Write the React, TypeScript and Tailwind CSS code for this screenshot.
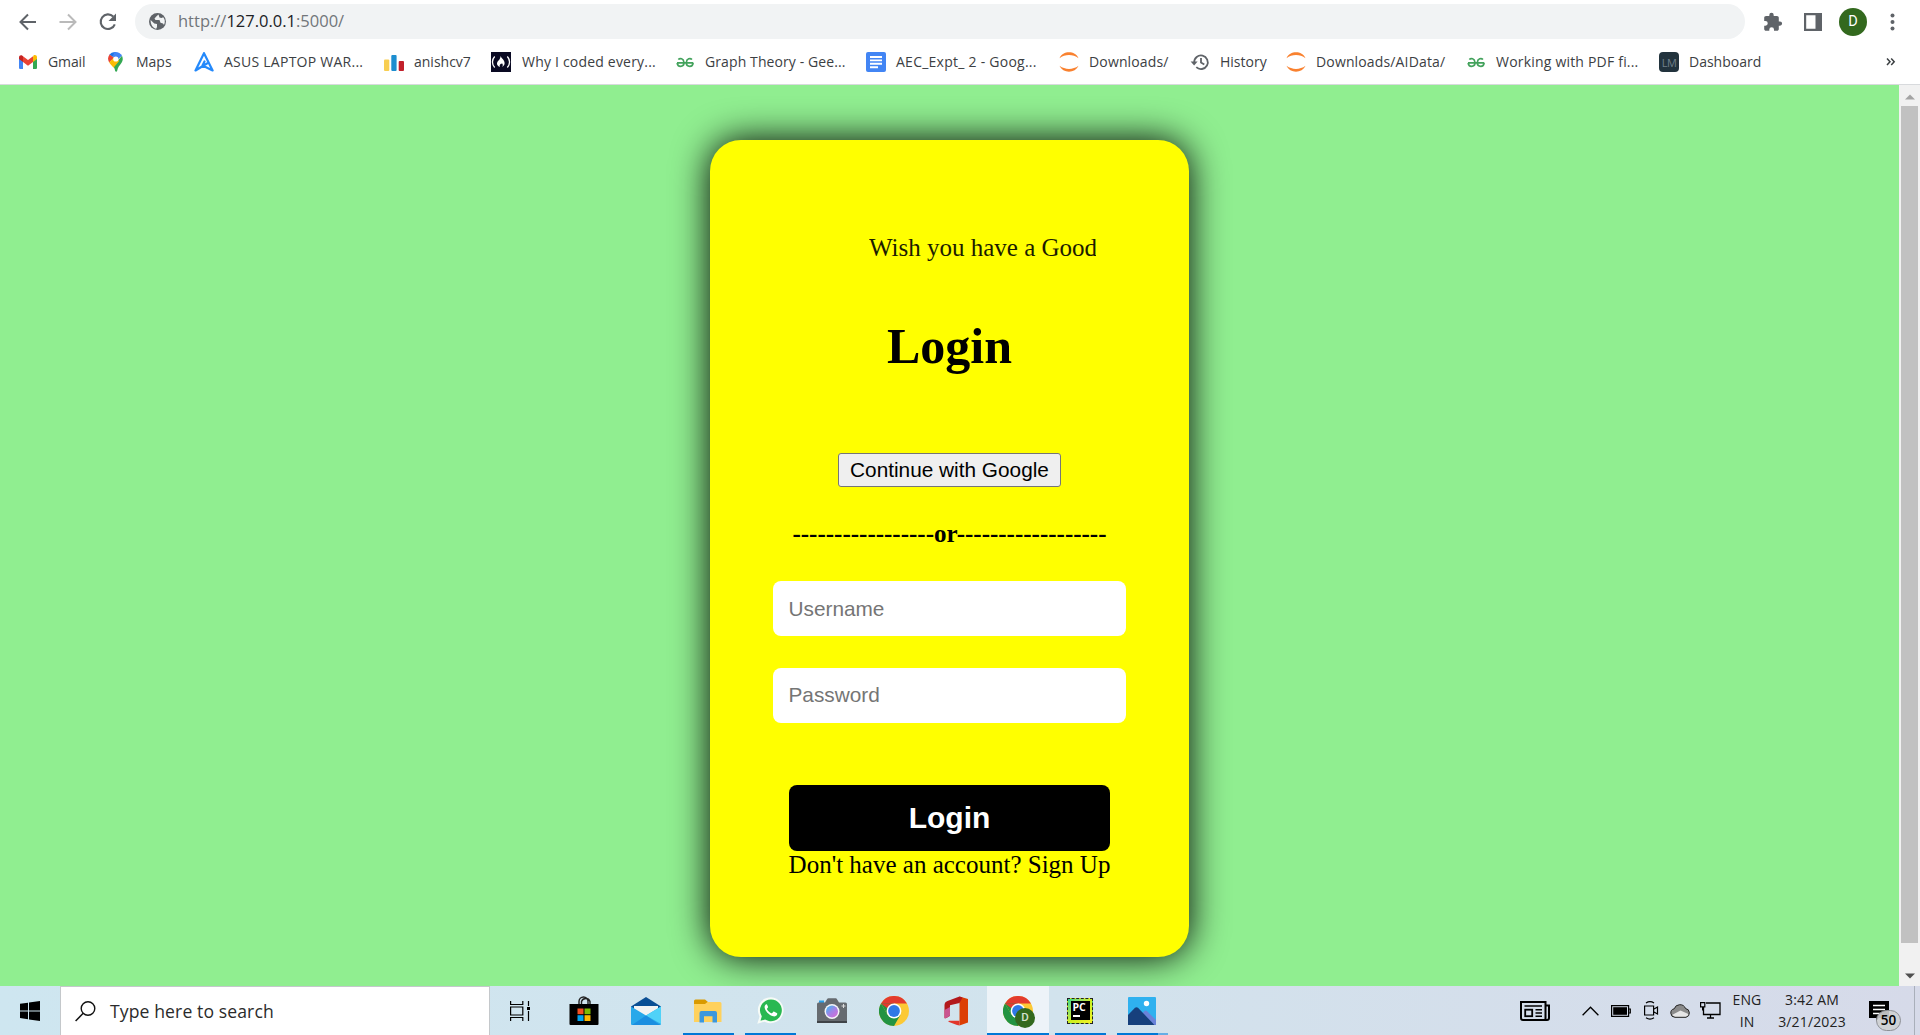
import type { ReactNode } from "react";

function Svg({ w, h, children, className = "" }: { w: number; h: number; children: ReactNode; className?: string }) {
  return (
    <svg width={w} height={h} viewBox={`0 0 ${w} ${h}`} fill="none" className={`block shrink-0 ${className}`}>
      {children}
    </svg>
  );
}

/* ---------- Bookmark icons (20x20) ---------- */

const Gmail = () => (
  <Svg w={20} h={20}>
    <path d="M1 5.5v10.200c0 .8.6 1.300 1.300 1.300H5V9z" fill="#4285f4" />
    <path d="M19 5.5v10.200c0 .8-.6 1.300-1.300 1.300H15V9z" fill="#34a853" />
    <path d="M15 5v5l4-3V5.3C19 3.4 17 2.5 15.5 3.6z" fill="#fbbc04" />
    <path d="M5 10V4.2l5 3.8 5-3.8V10l-5 3.8z" fill="#ea4335" />
    <path d="M1 5.3V7l4 3V4.2l-.6-.5C3 2.6 1 3.4 1 5.3z" fill="#c5221f" />
  </Svg>
);

const Maps = () => (
  <Svg w={20} h={20}>
    <path d="M3.3 2.8A7 7 0 0 1 10 .2L7 5z" fill="#1a73e8" />
    <path d="M8 .3c3-.8 6.6.7 8 3.5L11.5 8 7 5z" fill="#4285f4" />
    <path d="M3.6 2.6A7 7 0 0 0 3.2 10.5L8 5.7z" fill="#ea4335" />
    <path d="M16 3.8c1.300 2.800.8 5.200-.6 7.200-2 2.800-3.600 4.300-4.200 7.700-.3 1.400-1.800 1.400-2.100 0-.4-2-.9-3.200-1.800-4.700z" fill="#34a853" />
    <path d="M3.2 10.5c1 2 2.8 3 4.3 5.2L13 9.2 11.5 5 8 5.2z" fill="#fbbc04" />
    <circle cx="9.8" cy="7" r="2.6" fill="#fff" />
  </Svg>
);

const Asus = () => (
  <Svg w={20} h={20}>
    <path d="M10 1.200 1.500 18.500 13 11.500M10 1.200 18.600 18.500 8.500 13.500 10.500 9.500" stroke="#2489fb" strokeWidth="2.2" strokeLinejoin="round" strokeLinecap="round" />
  </Svg>
);

const Bars = () => (
  <Svg w={20} h={20}>
    <rect x="0" y="7.5" width="5.3" height="11.5" rx="1" fill="#f8ce51" />
    <rect x="7.3" y="3" width="5.3" height="16" rx="1" fill="#1c8ed0" />
    <rect x="14.7" y="9" width="5.3" height="10" rx="1" fill="#c2202b" />
  </Svg>
);

const Fcc = () => (
  <Svg w={20} h={20}>
    <rect width="20" height="20" fill="#0a0a23" />
    <path d="M3.700 4.500c-3 3.200-3 7.800 0 11M16.300 4.500c3 3.200 3 7.800 0 11" stroke="#fff" strokeWidth="1.3" />
    <path d="M9.6 4c.6 2.200 4.400 4.200 4 7.600-.2 1.700-1.200 2.800-2.400 3.400 1-1.600.6-2.700-.3-3.900-.2.9-.7 1-1 .6-1.300 1-1.500 2.200-.8 3.300C5.500 13.800 5.300 11 7.300 8.800 8.800 7.200 9.500 6 9.600 4z" fill="#fff" />
  </Svg>
);

const Gfg = () => (
  <Svg w={20} h={20}>
    <path d="M2 10.800h16.300M3.300 7.500C5 5.900 8.600 6.300 9 10.500 9 13 7.500 14.300 5.500 14.300 3.600 14.300 2.400 13 2.200 10.800M17 7.500c-1.700-1.600-5.300-1.200-5.700 3 0 2.500 1.500 3.800 3.500 3.800 1.900 0 3.100-1.300 3.300-3.500" stroke="#43a25c" strokeWidth="1.7" />
  </Svg>
);

const Docs = () => (
  <Svg w={20} h={20}>
    <rect width="20" height="20" rx="2" fill="#4285f4" />
    <path d="M4 5h12M4 8.400h12M4 11.700h12M4 15.200h8" stroke="#fff" strokeWidth="1.9" />
  </Svg>
);

const Jupyter = () => (
  <Svg w={20} h={20}>
    <path d="M.5 6.200C3.800-1.600 16.200-1.600 19.500 6.200 14 2 6 2 .5 6.200zM.5 13.800c3.300 7.800 15.700 7.800 19 0-5.500 4.200-13.500 4.200-19 0z" fill="#f9812f" />
  </Svg>
);

const HistoryIcon = () => (
  <Svg w={20} h={20}>
    <path d="M4.200 10.500A6.800 6.800 0 1 1 6.300 15.200M11 6v4.500l3.300 2" stroke="#5f6368" strokeWidth="1.8" />
    <path d="M.6 9.500h7L4.100 13.500z" fill="#5f6368" />
  </Svg>
);

const Dash = () => (
  <div className="flex size-5 items-center justify-center rounded bg-[#22333d] font-['Open_Sans',sans-serif] text-[11px] leading-none tracking-[-0.5px] text-[#71808a]">
    LM
  </div>
);

type Bookmark = { label: string; icon: ReactNode; width: string; text: string };

const bookmarks: Bookmark[] = [
  { label: "Gmail", icon: <Gmail />, width: "w-[88px]", text: "tracking-[-0.1px]" },
  { label: "Maps", icon: <Maps />, width: "w-[88px]", text: "" },
  { label: "ASUS LAPTOP WAR...", icon: <Asus />, width: "w-[190px]", text: "tracking-[0.25px]" },
  { label: "anishcv7", icon: <Bars />, width: "w-[107px]", text: "" },
  { label: "Why I coded every...", icon: <Fcc />, width: "w-[184px]", text: "tracking-[0.2px] ml-px" },
  { label: "Graph Theory - Gee...", icon: <Gfg />, width: "w-[191px]", text: "tracking-[0.1px]" },
  { label: "AEC_Expt_ 2 - Goog...", icon: <Docs />, width: "w-[193px]", text: "tracking-[0.25px]" },
  { label: "Downloads/", icon: <Jupyter />, width: "w-[131px]", text: "tracking-[0.15px]" },
  { label: "History", icon: <HistoryIcon />, width: "w-[96px]", text: "" },
  { label: "Downloads/AIData/", icon: <Jupyter />, width: "w-[180px]", text: "tracking-[0.15px]" },
  { label: "Working with PDF fi...", icon: <Gfg />, width: "w-[193px]", text: "tracking-[0.2px]" },
  { label: "Dashboard", icon: <Dash />, width: "w-[130px]", text: "" },
];

function Toolbar() {
  return (
    <div className="flex h-[43px] items-center pl-[18px]">
      <Svg w={20} h={20}>
        <path d="M18 10H3M10 2.500 2.500 10l7.500 7.500" stroke="#5f6368" strokeWidth="2" />
      </Svg>
      <Svg w={20} h={20} className="ml-5">
        <path d="M1.500 10H17M10 2.500l7.500 7.500-7.500 7.500" stroke="#bababa" strokeWidth="2" />
      </Svg>
      <Svg w={20} h={20} className="ml-5">
        <path d="M15.200 4.600A7.300 7.300 0 1 0 16.800 12.300" stroke="#5f6368" strokeWidth="2.1" />
        <path d="M18 1.500V9h-7.500z" fill="#5f6368" />
      </Svg>
      <div className="ml-[17px] flex h-[35px] w-[1610px] items-center rounded-full bg-[#f1f3f4] pl-[14px]">
        <Svg w={17} h={17}>
          <circle cx="8.5" cy="8.5" r="8.5" fill="#5f6368" />
          <path d="M1.600 7 5.300 10.600 8 11v3l-.8 1.800C4 15 1.500 12 1.600 7zM9.500 1.600 7.300 3.500 5.500 5.500l1 1.500h4l1 2.800 2.500.8 1 1.400c1.500-3 .8-6-.8-7.700L12.500 5l-2-.5z" fill="#f1f3f4" />
        </Svg>
        <div className="ml-3 whitespace-pre text-[16.5px] text-[#72767a]">
          http://<span className="text-[#202124]">127.0.0.1</span>:5000/
        </div>
      </div>
      <Svg w={20} h={20} className="ml-[18px]">
        <path d="M17 9.500h-1.200V5.800c0-1-.8-1.800-1.800-1.800h-3.300V3a2.200 2.200 0 0 0-4.400 0v1H3.200C1.800 4 1.200 4.800 1.200 5.800V9h1.200a2.300 2.300 0 0 1 0 4.700H1.200V17c0 1 .8 1.800 1.800 1.800h3.300v-1.200a2.300 2.300 0 0 1 4.700 0v1.200h3c1 0 1.800-.8 1.800-1.800v-3.300H17a2.100 2.100 0 0 0 0-4.200z" fill="#5f6368" />
      </Svg>
      <Svg w={18} h={18} className="ml-[21px]">
        <path d="M0 0h18v18H0zM2.200 2.200v13.600h9.300V2.200z" fill="#5f6368" fillRule="evenodd" />
      </Svg>
      <div className="ml-[17px] flex size-7 items-center justify-center rounded-full bg-[#33691e] font-['Roboto',sans-serif] text-[14.5px] text-white">D</div>
      <Svg w={6} h={20} className="ml-[23px]">
        <circle cx="2.5" cy="3.5" r="2" fill="#5f6368" />
        <circle cx="2.5" cy="10" r="2" fill="#5f6368" />
        <circle cx="2.5" cy="16.5" r="2" fill="#5f6368" />
      </Svg>
    </div>
  );
}

function BookmarkBar() {
  return (
    <div className="flex h-[41px] items-center pb-[3px] pl-[18px]">
      {bookmarks.map((b, i) => (
        <div key={i} className={`flex shrink-0 items-center gap-[10px] ${b.width}`}>
          {b.icon}
          <span className={`-mt-0.5 whitespace-nowrap text-[14px] text-[#3c4043] ${b.text}`}>{b.label}</span>
        </div>
      ))}
      <Svg w={10} h={10} className="-mt-px ml-[97px]">
        <path d="M1 1.500 4 4.700 1 8M5.200 1.500l3 3.200-3 3.300" stroke="#3c4043" strokeWidth="1.5" />
      </Svg>
    </div>
  );
}

function LoginCard() {
  return (
    <div className="mt-[55px] flex h-[817px] w-[479px] flex-col items-center rounded-[31px] bg-[#ffff00] pt-[94px] font-['Liberation_Serif',serif] text-[25px] leading-7 text-black shadow-[0_0_37.5px_#000]">
      <div className="w-[321px] overflow-hidden whitespace-nowrap pl-[80px]">
        <div className="w-[226.5px] overflow-hidden text-[#1c1c00]">Wish you have a Good</div>
      </div>
      <h1 className="mt-[56px] text-[50px] font-bold leading-[56px]">Login</h1>
      <button className="mt-[79px] h-[34px] w-[223px] rounded-[3px] border border-[#767676] bg-[#efefef] font-['Liberation_Sans',sans-serif] text-[20.8px] leading-6">
        Continue with Google
      </button>
      <div className="mt-[33px] font-bold">-----------------or------------------</div>
      <input placeholder="Username" className="mt-[33px] h-[55px] w-[353px] rounded-lg bg-white px-[15.5px] font-['Liberation_Sans',sans-serif] text-[20.8px] placeholder:text-[#757575]" />
      <input placeholder="Password" className="mt-8 h-[55px] w-[353px] rounded-lg bg-white px-[15.5px] pb-0.5 font-['Liberation_Sans',sans-serif] text-[20.8px] placeholder:text-[#757575]" />
      <button className="mt-[62px] h-[66px] w-[321px] rounded-lg bg-black font-['Liberation_Sans',sans-serif] text-[30px] font-bold text-white">Login</button>
      <div className="whitespace-nowrap">Don't have an account? Sign Up</div>
    </div>
  );
}

function Scrollbar() {
  return (
    <div className="flex w-[21px] shrink-0 flex-col items-center bg-[#f1f1f1]">
      <div className="flex h-[21px] items-center pt-0.5">
        <Svg w={10} h={6}>
          <path d="M0 5.500 5 .5l5 5z" fill="#a3a3a3" />
        </Svg>
      </div>
      <div className="h-[837px] w-[17px] bg-[#c1c1c1]" />
      <div className="mt-auto flex h-[21px] items-center">
        <Svg w={10} h={6}>
          <path d="M0 .5 5 5.500l5-5z" fill="#505050" />
        </Svg>
      </div>
    </div>
  );
}

/* ---------- Taskbar icons ---------- */

const TaskView = () => (
  <Svg w={20} h={20}>
    <path d="M.6 0v3.500h12.200V0M.6 20v-3.500h12.200V20M.6 6h12.200v8H.6zM18.500 0v5M18.500 10v10" stroke="#000" strokeWidth="1.2" />
    <rect x="17" y="6" width="3" height="3" fill="#000" />
  </Svg>
);

const Store = () => (
  <Svg w={30} h={30}>
    <path d="M10 8V5.500a4.500 4.500 0 0 1 9 0V8M12.500 8V5.500a4.500 4.500 0 0 1 8.500 0V8" stroke="#222" strokeWidth="1.4" />
    <path d="M.5 8h29v20a1 1 0 0 1-1 1h-27a1 1 0 0 1-1-1z" fill="#000" />
    <path d="M8.500 12.500h6v5.700h-6z" fill="#f25022" />
    <path d="M15.500 12.500h6v5.700h-6z" fill="#7fba00" />
    <path d="M8.500 19.200h6v5.800h-6z" fill="#00a4ef" />
    <path d="M15.500 19.200h6v5.800h-6z" fill="#ffb900" />
  </Svg>
);

const Mail = () => (
  <Svg w={30} h={28}>
    <path d="M0 9.500 15 0l15 9.500v6H0z" fill="#0b4f94" />
    <path d="M3 9h24v8l-12 6-12-6z" fill="#f3f3f3" />
    <path d="M0 9.500 15 18.500 30 9.500V27a1 1 0 0 1-1 1H1a1 1 0 0 1-1-1z" fill="#28a8ea" />
    <path d="m15 18.500 15-9V27z" fill="#50d2f8" />
    <path d="M15 18.500 1 28h28z" fill="#1b8ee0" />
  </Svg>
);

const Explorer = () => (
  <Svg w={28} h={24}>
    <path d="M0 2a1.500 1.500 0 0 1 1.500-1.500H11L14 3v4H0z" fill="#d99a00" />
    <path d="M0 5h11l2.500-2H26a1.500 1.500 0 0 1 1.500 1.500V23H0z" fill="#ffd15c" />
    <path d="M5.500 23.500V14a2 2 0 0 1 2-2H21a2 2 0 0 1 2 2v9.500h-4.500v-6.300h-8.500v6.300z" fill="#3c97dd" />
  </Svg>
);

const Whatsapp = () => (
  <Svg w={27} h={27}>
    <path d="M14 .2A13 13 0 0 0 2.500 19.500L.3 26.700l7.200-2A13 13 0 1 0 14 .2z" fill="#f6fbf7" />
    <path d="M14 2.400A10.900 10.900 0 0 0 4.800 19.200L3.500 23.800l4.600-1.300A10.900 10.900 0 1 0 14 2.400z" fill="#29b851" />
    <path d="M9.500 7.300c-.9.200-2 1.200-1.900 3 .2 3.400 4.300 8 8.600 9 2 .4 3.600-.6 4-2.100.2-.8.100-1-.5-1.300l-2.400-1.200c-.6-.3-.8-.2-1.100.2l-1 1.200c-.3.300-.5.300-.9.100-2-.9-3.300-2.100-4.300-3.900-.2-.4 0-.6.200-.8l.7-.9c.2-.3.200-.5.100-.8l-1-2.200c-.1-.2-.2-.3-.5-.3z" fill="#fff" />
  </Svg>
);

const Camera = () => (
  <Svg w={30} h={25}>
    <path d="M2 2.500h5v5H2z" fill="#2a9fe5" />
    <path d="M0 6a1.500 1.500 0 0 1 1.500-1.500H8L10 1.200C10.300.5 10.800.3 11.500.3h7c.7 0 1.200.2 1.500.9l2 3.300h6.500A1.500 1.500 0 0 1 30 6v18.500H0z" fill="#666b70" />
    <path d="M0 23h30v2H0z" fill="#3f4347" />
    <circle cx="15" cy="13.500" r="7.500" fill="#f4f4f8" />
    <circle cx="15" cy="13.500" r="6" fill="url(#lens)" />
    <path d="M26.500 6v4M24.500 8h4" stroke="#ddd" />
    <defs>
      <linearGradient id="lens" x1="10" y1="8" x2="20" y2="19" gradientUnits="userSpaceOnUse">
        <stop stopColor="#3fb9ee" />
        <stop offset=".5" stopColor="#a183e8" />
        <stop offset="1" stopColor="#d56bd5" />
      </linearGradient>
    </defs>
  </Svg>
);

const Chrome = () => (
  <Svg w={30} h={30}>
    <circle cx="15" cy="15" r="15" fill="#fcc934" />
    <path d="M15 15 2 7.500A15 15 0 0 1 28 7.500H15z" fill="#e33b2e" />
    <path d="M2 7.500A15 15 0 0 0 15 30l6.500-11.300L8.500 18.700z" fill="#229342" />
    <path d="m2 7.500 6.500 11.300L15 15V7.500z" fill="#229342" />
    <path d="M2 7.500 8 12l7-4.500z" fill="#e33b2e" />
    <circle cx="15" cy="15" r="7.400" fill="#fff" />
    <circle cx="15" cy="15" r="5.900" fill="#2f78e6" />
  </Svg>
);

const Office = () => (
  <Svg w={24} h={30}>
    <path d="M15.500.5 24 3v23.500L15.500 29.500z" fill="#dc3e04" />
    <path d="M15.500.5 3.500 5C1.500 5.800.5 7 .5 9v12.500c0 .8.5 1 1.200.7L5 20.500c.7-.4 1-1 1-1.800V9.300L15.500 7l3-5.500z" fill="#b3191c" />
    <path d="M.5 14v7.500c0 .8.500 1 1.200.7L5 20.500c.7-.4 1-1 1-1.800V11z" fill="#c95490" />
    <path d="M5 24.800h10.500V29.500L13 29 5 26c-.8-.3-.8-1.100 0-1.200z" fill="#e2362b" />
  </Svg>
);

const Pycharm = () => (
  <div className="flex size-[26px] shrink-0 items-center justify-center border border-dashed border-[#222] bg-gradient-to-br from-[#21d789] via-[#c9ef20] to-[#f6f125]">
    <div className="flex h-[19px] w-[19px] flex-col bg-black pl-0.5 font-['Open_Sans',sans-serif] text-[10.5px] font-bold leading-[12px] text-white">
      PC
      <span className="mt-0.5 h-[1.5px] w-[7px] bg-white" />
    </div>
  </div>
);

const Photos = () => (
  <Svg w={28} h={28}>
    <rect width="28" height="28" rx="1" fill="#2fb1ef" />
    <path d="M11 20 16.500 14c.8-.8 1.700-.8 2.400.1L28 23v5H14z" fill="#6a83d9" />
    <path d="m0 18 7-7.200c.9-.9 2.100-.9 3 0L26.500 28H0z" fill="#17407c" />
    <circle cx="18.500" cy="6.500" r="2.700" fill="#fff" />
  </Svg>
);

const ChromeProfile = () => (
  <div className="relative">
    <Chrome />
    <div className="absolute -right-0.5 top-3 flex size-5 items-center justify-center rounded-full bg-[#33691e] font-['Roboto',sans-serif] text-[11.5px] font-medium text-[#d5e2cf]">D</div>
  </div>
);

type TaskbarApp = { icon: ReactNode; underline?: string; trailing?: boolean; active?: boolean };

const apps: TaskbarApp[] = [
  { icon: <Store /> },
  { icon: <Mail /> },
  { icon: <Explorer />, underline: "w-[51px]" },
  { icon: <Whatsapp />, underline: "w-[51px]" },
  { icon: <Camera /> },
  { icon: <Chrome /> },
  { icon: <Office /> },
  { icon: <ChromeProfile />, underline: "w-[62px]", active: true },
  { icon: <Pycharm />, underline: "w-[51px]" },
  { icon: <Photos />, underline: "w-[41px]", trailing: true },
];

function Taskbar() {
  return (
    <div className="flex h-[49px] shrink-0 bg-linear-to-r from-[#cee6f0] via-[#d2e3ed] via-55% to-[#d6dae9]">
      <div className="flex w-[60px] items-center justify-center">
        <Svg w={20} h={20}>
          <path d="M0 2.800 8 1.700v7.700H0zM9 1.500 20 0v9.400H9zM0 10.400h8v7.800L0 17.100zM9 10.400h11V20L9 18.400z" fill="#000" />
        </Svg>
      </div>
      <div className="flex w-[430px] items-center border border-b-0 border-[#c4c8cb] bg-white pl-[14px]">
        <Svg w={21} h={21}>
          <circle cx="13" cy="7.5" r="6.8" stroke="#111" strokeWidth="1.4" />
          <path d="M8.200 12.300.6 20" stroke="#111" strokeWidth="1.5" />
        </Svg>
        <span className="ml-[14px] text-[17.6px] tracking-[0.1px] text-[#2b2b2b]">Type here to search</span>
      </div>
      <div className="flex w-[63px] items-center justify-center pr-[3px]">
        <TaskView />
      </div>
      {apps.map((a, i) => (
        <div key={i} className={`relative flex w-[62px] shrink-0 items-center justify-center ${a.active ? "bg-[#edf3f8]" : ""}`}>
          {a.icon}
          {a.underline && (
            <div className="absolute inset-x-0 bottom-0 flex h-0.5 justify-center">
              <div className={`bg-[#0078d7] ${a.underline}`} />
              {a.trailing && <div className="w-[10px] bg-[#66aee6]" />}
            </div>
          )}
        </div>
      ))}
      <div className="ml-auto flex items-center">
        <Svg w={30} h={20}>
          <path d="M1 1h24.500v16.500a1.500 1.500 0 0 1-1.500 1.500H3a2 2 0 0 1-2-2zM25.500 4.500H29V17c0 1.300-.7 2-2 2h-3" stroke="#000" strokeWidth="2" />
          <path d="M4.500 5h17.500M15.500 8.800H22M15.500 12H22M15.500 15.300H22" stroke="#000" strokeWidth="1.5" />
          <rect x="5.2" y="8.7" width="7" height="6.5" stroke="#000" strokeWidth="1.8" />
        </Svg>
        <Svg w={17} h={10} className="ml-8">
          <path d="m.6 9.300 7.900-8 7.900 8" stroke="#000" strokeWidth="1.3" />
        </Svg>
        <Svg w={20} h={12} className="ml-3">
          <path d="M.6.6h17v10.800H.6zM18 4h1.300v4H18" stroke="#000" strokeWidth="1.2" />
          <path d="M2.200 2.200H16v7.600H2.200z" fill="#000" />
        </Svg>
        <Svg w={15} h={19} className="ml-[13px]">
          <path d="M.6 5h9v9h-9zM9.600 8.200 13.500 6v7L9.600 10.800M2 2C4.500.3 7.500.3 10 2M2 16.800c2.500 1.700 5.500 1.700 8 0" stroke="#000" strokeWidth="1.2" />
        </Svg>
        <Svg w={21} h={14} className="ml-[11px]">
          <path d="M5 13.300a4.300 4.300 0 0 1-.8-8.500A6 6 0 0 1 15.500 4.500a4.500 4.500 0 0 1 .5 8.800z" fill="#8b8b8b" />
          <path d="M5 13.300 2 11l8.500-4.500 9 4-3.500 2.800z" fill="#e6e6e6" />
          <path d="M5 13.300a4.300 4.300 0 0 1-.8-8.500A6 6 0 0 1 15.500 4.500a4.500 4.500 0 0 1 .5 8.800z" stroke="#222" />
        </Svg>
        <Svg w={21} h={17} className="ml-[9px]">
          <path d="M6 1h14v11.500H3.500V5M10.500 12.500V16M7 16h7" stroke="#000" strokeWidth="1.3" />
          <path d="M.6.6h4.200v4.200H.6zM2.600 5v3.500" stroke="#000" strokeWidth="1.2" />
        </Svg>
        <div className="ml-[10px] w-8 text-center text-[14px] leading-[22px] tracking-[0.1px] text-[#222]">
          <div>ENG</div>
          <div>IN</div>
        </div>
        <div className="ml-[11px] w-[76px] text-center text-[14px] leading-[22px] tracking-[0.15px] text-[#222]">
          <div>3:42 AM</div>
          <div>3/21/2023</div>
        </div>
        <div className="relative ml-[19px] h-5 w-5">
          <Svg w={20} h={20}>
            <path d="M0 0h20v17H10l-3 3v-3H0z" fill="#000" />
            <path d="M4 4.500h12M4 8.500h12M4 12.500h7" stroke="#fff" strokeWidth="1.3" />
          </Svg>
          <div className="absolute left-[7px] top-[9px] flex h-[21px] w-[25px] items-center justify-center rounded-full border border-[#8d9096] bg-[#cfd0d3]/90 text-[13.5px] font-semibold text-black">50</div>
        </div>
        <div className="ml-[25px] mr-[5px] h-[49px] w-px bg-[#a9afba]" />
      </div>
    </div>
  );
}

export default function App() {
  return (
    <div className="flex h-[1035px] w-[1920px] flex-col overflow-hidden bg-white font-['Open_Sans',sans-serif]">
      <header className="h-[85px] shrink-0 border-b border-[#d8dadd]">
        <Toolbar />
        <BookmarkBar />
      </header>
      <main className="flex min-h-0 flex-1">
        <div className="flex flex-1 justify-center overflow-hidden bg-[#90ee90]">
          <LoginCard />
        </div>
        <Scrollbar />
      </main>
      <Taskbar />
    </div>
  );
}
